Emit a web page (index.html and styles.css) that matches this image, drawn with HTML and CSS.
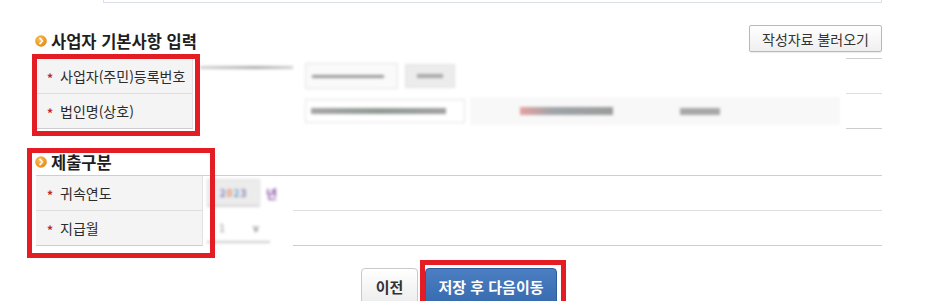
FILE: index.html
```html
<!DOCTYPE html>
<html lang="ko">
<head>
<meta charset="utf-8">
<title>사업자 기본사항 입력</title>
<link rel="stylesheet" href="styles.css">
</head>
<body>
<div class="page">
  <div class="topbox"></div>

  <div class="sec-head">
    <h2 class="sec-title"><span class="bullet"><svg viewBox="0 0 12 12" width="12" height="12"><defs><radialGradient id="g1" cx="40%" cy="35%" r="70%"><stop offset="0" stop-color="#fbc35a"/><stop offset="1" stop-color="#e5860e"/></radialGradient></defs><circle cx="6" cy="6" r="5.8" fill="url(#g1)"/><path d="M5 3.4 L7.4 6 L5 8.6" fill="none" stroke="#fff" stroke-width="1.6" stroke-linecap="round" stroke-linejoin="round"/></svg></span>사업자 기본사항 입력</h2>
    <button class="btn-load" type="button">작성자료 불러오기</button>
  </div>

  <table class="form t1">
    <tr class="first">
      <th><span class="req">*</span>사업자(주민)등록번호</th>
      <td class="mid">
        <div class="blur r1">
          <span class="gbar"></span>
          <span class="inp inp1"><span class="txt"></span></span>
          <span class="sbtn"><span class="txt"></span></span>
        </div>
      </td>
      <td class="tail"></td>
    </tr>
    <tr>
      <th><span class="req">*</span>법인명(상호)</th>
      <td class="mid">
        <div class="blur r2">
          <span class="inp inp2"><span class="txt"></span></span>
          <span class="zone">
            <span class="rbar"></span>
            <span class="gbar2"></span>
          </span>
        </div>
      </td>
      <td class="tail"></td>
    </tr>
  </table>

  <h2 class="sec-title second"><span class="bullet"><svg viewBox="0 0 12 12" width="12" height="12"><defs><radialGradient id="g2" cx="40%" cy="35%" r="70%"><stop offset="0" stop-color="#fbc35a"/><stop offset="1" stop-color="#e5860e"/></radialGradient></defs><circle cx="6" cy="6" r="5.8" fill="url(#g2)"/><path d="M5 3.4 L7.4 6 L5 8.6" fill="none" stroke="#fff" stroke-width="1.6" stroke-linecap="round" stroke-linejoin="round"/></svg></span>제출구분</h2>

  <table class="form t2">
    <tr class="first">
      <th><span class="req">*</span>귀속연도</th>
      <td class="mid">
        <div class="blur y1">
          <span class="ybox"><span class="c1">2</span><span class="c2">0</span><span class="c3">2</span><span class="c4">3</span></span>
          <span class="nyeon">년</span>
        </div>
      </td>
      <td class="tail"></td>
    </tr>
    <tr>
      <th><span class="req">*</span>지급월</th>
      <td class="mid">
        <div class="blur y2">
          <span class="sel"><span class="sv">1</span><span class="arr">v</span></span>
        </div>
      </td>
      <td class="tail"></td>
    </tr>
  </table>

  <div class="actions">
    <button class="btn-prev" type="button">이전</button>
    <button class="btn-next" type="button">저장 후 다음이동</button>
  </div>

  <div class="mark m1"></div>
  <div class="mark m2"></div>
  <div class="mark m3"></div>
</div>
</body>
</html>
```

FILE: styles.css
```css
* { box-sizing: border-box; }

html, body {
  margin: 0;
  padding: 0;
  background: #fff;
}

body {
  font-family: "Noto Sans CJK KR", "Noto Sans", sans-serif;
  color: #333;
}

.page {
  position: relative;
  width: 947px;
  height: 301px;
  overflow: hidden;
  padding: 0 65px 0 36px;
}

.topbox {
  margin-left: 67px;
  height: 3px;
  border: 1px solid #dbe1ea;
  border-top: 0;
}

.sec-head {
  display: flex;
  justify-content: space-between;
  align-items: flex-end;
  margin-top: 22px;
  height: 27px;
}

.sec-title {
  display: flex;
  align-items: center;
  margin: 0;
  font-size: 16.5px;
  line-height: 20px;
  font-weight: 700;
  color: #1e1e1e;
  padding-bottom: 1px;
}

.bullet {
  display: inline-flex;
  width: 12px;
  height: 12px;
  margin-right: 4px;
  margin-left: -1px;
}

.btn-load {
  width: 133px;
  height: 27px;
  padding: 0;
  border: 1px solid #b9b9b9;
  border-radius: 2px;
  background: linear-gradient(#ffffff, #efefef);
  font-family: inherit;
  font-size: 14px;
  color: #333;
  box-shadow: 0 1px 1px rgba(0,0,0,0.08);
}

/* tables */
.form {
  width: 846px;
  border-collapse: separate;
  border-spacing: 0;
  table-layout: fixed;
}

.t1 { margin-top: 6px; }

.form th,
.form td {
  height: 34px;
  padding: 0;
  border-bottom: 1px solid #dedede;
}

.form tr.first th,
.form tr.first td {
  border-top: 1px solid #cfcfcf;
}

.form tr:last-child th,
.form tr:last-child td {
  border-bottom-color: #cdcdcd;
}

.form th {
  background: #f4f4f4;
  border-right: 1px solid #e2e2e2;
  text-align: left;
  padding-left: 11px;
  font-size: 14px;
  font-weight: 400;
  color: #2b2b2b;
  white-space: nowrap;
}

.req {
  display: inline-block;
  color: #c0272d;
  font-weight: 700;
  font-size: 12px;
  width: 13px;
  position: relative;
  top: 1px;
}

.t1 th { width: 157px; }
.t1 .mid { width: 653px; }
.form.t1 tr .mid,
.form.t1 tr.first .mid,
.form.t1 tr:last-child .mid { border-color: transparent; }

.t2 th { width: 167px; }
.t2 .mid { width: 90px; }
.form.t2 tr .mid,
.form.t2 tr:last-child .mid { border-bottom-color: transparent; }

/* blurred, masked content */
.blur {
  display: flex;
  align-items: center;
  height: 34px;
  filter: blur(1.6px);
}

.r1 .gbar {
  align-self: flex-start;
  margin: 7px 0 0 7px;
  width: 93px;
  height: 3px;
  background: linear-gradient(90deg, #d0d0d0, #a9a9a9 60%, #cfcfcf);
}

.inp {
  display: flex;
  align-items: center;
  border: 1px solid #e3e3e3;
  background: #fff;
}

.inp .txt {
  display: block;
  background: #9a9a9a;
}

.inp1 {
  margin-left: 12px;
  width: 93px;
  height: 26px;
  padding-left: 6px;
  background: #fafafa;
}
.inp1 .txt { width: 72px; height: 3px; }

.sbtn {
  display: flex;
  align-items: center;
  justify-content: center;
  margin-left: 7px;
  width: 50px;
  height: 24px;
  background: #ececec;
  border: 1px solid #e0e0e0;
}
.sbtn .txt { width: 26px; height: 4px; background: #a8a8a8; }

.r2 { padding-left: 112px; }

.inp2 {
  width: 160px;
  height: 24px;
  padding-left: 5px;
}
.inp2 .txt { width: 135px; height: 6px; background: linear-gradient(90deg, #a5a5a5, #8f9a92 50%, #a0a0a0); }

.zone {
  display: flex;
  align-items: center;
  margin-left: 5px;
  width: 370px;
  height: 28px;
  background: #f8f8f8;
}

.rbar {
  margin-left: 50px;
  width: 93px;
  height: 8px;
  background: linear-gradient(90deg, #e5a0a0, #9ea4a8 35%, #9b9b9b);
}

.gbar2 {
  margin-left: 67px;
  width: 40px;
  height: 7px;
  background: #a7a7a7;
}

.y1 { padding-left: 4px; }

.ybox {
  display: flex;
  align-items: center;
  justify-content: center;
  width: 53px;
  height: 28px;
  background: #ececec;
  border: 1px solid #dedede;
  border-bottom: 2px solid #d6d6d6;
  font-size: 10px;
  font-weight: 700;
  letter-spacing: 1px;
}
.c1 { color: #7f7fc0; }
.c2 { color: #e08a6a; }
.c3 { color: #6aa0c8; }
.c4 { color: #7d7db5; }

.nyeon {
  margin-left: 6px;
  font-size: 12px;
  font-weight: 700;
  color: #8a55a8;
}

.y2 { padding-left: 4px; }

.sel {
  display: flex;
  align-items: center;
  width: 63px;
  height: 30px;
  border-bottom: 2px solid #c9c9c9;
  color: #9a9a9a;
  font-size: 11px;
}
.sv { margin-left: 12px; }
.arr { margin-left: 28px; font-size: 10px; font-weight: 700; color: #888; }

.t2 { margin-top: 2px; }

.second { margin-top: 23px; }

/* actions */
.actions {
  display: flex;
  justify-content: center;
  gap: 7px;
  margin-top: 22px;
}

.btn-prev,
.btn-next {
  height: 40px;
  padding: 0;
  border-radius: 4px;
  font-family: inherit;
  font-size: 15px;
  font-weight: 700;
  padding-bottom: 4px;
}

.btn-prev {
  width: 57px;
  border: 1px solid #c9c9c9;
  background: linear-gradient(#ffffff, #ebebeb);
  color: #333;
}

.btn-next {
  width: 132px;
  border: 1px solid #2e5b9b;
  background: linear-gradient(#4b7ec2, #356aad);
  color: #fff;
}

/* red annotation boxes (overlay) */
.mark {
  position: absolute;
  border: 5px solid #e41d25;
  pointer-events: none;
}
.m1 { left: 32px; top: 54px; width: 168px; height: 82px; }
.m2 { left: 27px; top: 148px; width: 188px; height: 110px; }
.m3 { left: 420px; top: 260px; width: 146px; height: 50px; }
```
